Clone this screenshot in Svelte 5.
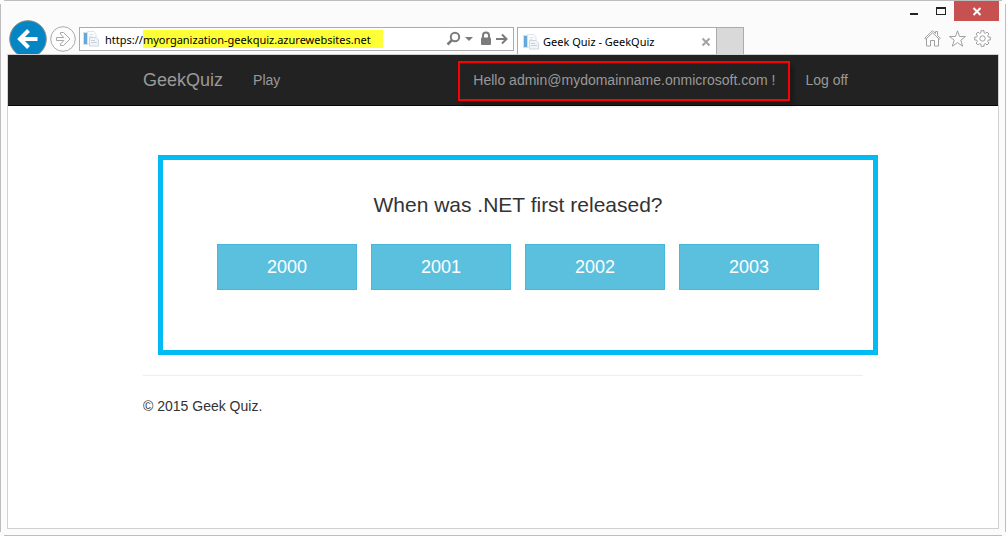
<script>
  const answers = ['2000', '2001', '2002', '2003'];
  let url = $state('https://myorganization-geekquiz.azurewebsites.net');
</script>

{#snippet favicon()}
  <svg class="favicon" width="16" height="16" viewBox="0 0 16 16" aria-hidden="true">
    <path d="M4.500 .5h6.500l2 2.500v10h-8.500z" fill="#fafcfe" stroke="#dde4eb" />
    <path d="M6.500 3.500h4M6.500 5.500h3" stroke="#dde4eb" />
    <rect x="0" y="1" width="5" height="13" fill="#cfe2f0" />
    <rect x="1" y="2" width="3" height="11" fill="#64a9da" />
    <path d="M6.500 6.500h6.500l2.500 2.500v6h-9z" fill="#f1f5f9" stroke="#cdd7e1" />
    <path d="M8 9.500h4M8 11.500h6" stroke="#c7d1da" />
  </svg>
{/snippet}

<div class="window">
  <header class="chrome">
    <div class="titlebar">
      <button aria-label="Minimize">
        <svg width="27" height="20" viewBox="0 0 27 20"><path d="M10 12h8v2h-8z" fill="#222" /></svg>
      </button>
      <button aria-label="Maximize">
        <svg width="27" height="20" viewBox="0 0 27 20"><path d="M9 6h10v8H9zM10 8v5h8V8z" fill="#222" fill-rule="evenodd" /></svg>
      </button>
      <button class="close" aria-label="Close">
        <svg width="45" height="20" viewBox="0 0 45 20"><path d="M19.500 7l7 7M26.500 7l-7 7" stroke="#fff" stroke-width="2" /></svg>
      </button>
    </div>

    <div class="toolbar">
      <button class="back" aria-label="Back">
        <svg width="38" height="34" viewBox="0 0 38 34">
          <circle cx="19" cy="19" r="18.300" fill="#0586c4" stroke="#8b8b8b" />
          <path d="M28.500 19H12" stroke="#fff" stroke-width="4" />
          <path d="M19.500 10.500L11 19l8.500 8.500" fill="none" stroke="#fff" stroke-width="4" />
        </svg>
      </button>
      <button class="forward" aria-label="Forward">
        <svg width="26" height="26" viewBox="0 0 26 26">
          <circle cx="13" cy="13" r="12.300" fill="#fdfdfd" stroke="#a9a9a9" />
          <path d="M6.500 11.500h7.300L10.500 8v-1.500h3L20 13l-6.500 6.500h-3V18l3.300-3.500H6.500z" fill="#fff" stroke="#a9a9a9" />
        </svg>
      </button>
      <div class="address">
        {@render favicon()}
        <input type="text" aria-label="Address" bind:value={url} spellcheck="false" />
        <button aria-label="Search">
          <svg width="30" height="16" viewBox="0 0 30 16">
            <circle cx="9" cy="6" r="4.200" fill="none" stroke="#7b7b7b" stroke-width="2" />
            <path d="M6 9L1.500 13.500" stroke="#7b7b7b" stroke-width="2.500" />
            <path d="M19 6h8l-4 4z" fill="#7b7b7b" />
          </svg>
        </button>
        <button aria-label="Website security">
          <svg width="12" height="16" viewBox="0 0 12 16">
            <path d="M3 7V4.500a3 3 0 0 1 6 0V7" fill="none" stroke="#7b7b7b" stroke-width="2" />
            <rect x="1" y="6.500" width="10" height="7.500" rx="1" fill="#7b7b7b" />
          </svg>
        </button>
        <button aria-label="Go">
          <svg width="12" height="16" viewBox="0 0 12 16">
            <path d="M0 8h10M6 3.500L10.500 8 6 12.500" fill="none" stroke="#7b7b7b" stroke-width="2" />
          </svg>
        </button>
      </div>
      <div class="tab">
        {@render favicon()}
        <span>Geek Quiz - GeekQuiz</span>
        <button aria-label="Close tab">
          <svg width="10" height="10" viewBox="0 0 10 10"><path d="M1.500 1.500l7 7M8.500 1.500l-7 7" stroke="#a3a3a3" stroke-width="2" /></svg>
        </button>
      </div>
      <button class="new-tab" aria-label="New tab"></button>
      <div class="tools">
        <button aria-label="Home">
          <svg width="17" height="17" viewBox="0 0 17 17" fill="#fff" stroke="#a0a0a0">
            <path d="M2.500 8.500v7.500h4v-5.500h4V16h4V8.500M.8 8.200l7.700-7.500 3 2.800V1.500h2v4l2.800 2.700-1 1L8.500 2.800 1.800 9.200z" />
          </svg>
        </button>
        <button aria-label="Favorites">
          <svg width="17" height="17" viewBox="0 0 17 17" fill="#fff" stroke="#a0a0a0">
            <path d="M8.500 .8l2 5.700h6l-4.700 3.700 1.900 6-5.200-3.600-5.200 3.600 1.900-6L.5 6.500h6z" />
          </svg>
        </button>
        <button aria-label="Tools">
          <svg width="17" height="17" viewBox="0 0 17 17" fill="#fff" stroke="#a0a0a0">
            <path d="M7 .7h3v2l1.500.7L13 2l2 2-1.400 1.500.7 1.500h2v3h-2l-.7 1.500L15 13l-2 2-1.500-1.400-1.500.7v2H7v-2l-1.500-.7L4 15l-2-2 1.400-1.500-.7-1.500h-2V7h2l.7-1.500L2 4l2-2 1.500 1.400L7 2.700z" />
            <circle cx="8.500" cy="8.500" r="2.700" />
          </svg>
        </button>
      </div>
    </div>
  </header>

  <div class="page">
    <nav>
      <div class="container bar">
        <a class="brand" href="#home">GeekQuiz</a>
        <a href="#play">Play</a>
        <a class="user" href="#account">Hello admin@mydomainname.onmicrosoft.com !</a>
        <a href="#logoff">Log off</a>
      </div>
    </nav>
    <div class="container">
      <main>
        <h1>When was .NET first released?</h1>
        <div class="answers">
          {#each answers as answer}
            <button>{answer}</button>
          {/each}
        </div>
      </main>
      <footer>© 2015 Geek Quiz.</footer>
    </div>
  </div>
</div>

<style>
  :global(body) {
    margin: 0;
    background: #fbfbfb;
  }
  .window {
    --edge: linear-gradient(#bdbdbd, #bdbdbd);
    box-sizing: border-box;
    min-height: 100vh;
    padding: 1px 7px 7px;
    display: flex;
    flex-direction: column;
    background:
      var(--edge) center top / calc(100% - 8px) 1px no-repeat,
      var(--edge) center bottom / calc(100% - 8px) 1px no-repeat,
      var(--edge) left center / 1px calc(100% - 8px) no-repeat,
      var(--edge) right center / 1px calc(100% - 8px) no-repeat,
      #fbfbfb;
  }
  button {
    padding: 0;
    border: 0;
    background: none;
    font: inherit;
    cursor: pointer;
  }
  svg {
    display: block;
    flex: none;
  }
  .chrome {
    font: 11px/16px "Noto Sans", "Open Sans", sans-serif;
    color: #000;
  }
  .titlebar {
    display: flex;
    justify-content: flex-end;
    align-items: flex-start;
    height: 19px;
  }
  .close {
    background: #c75050;
  }
  .toolbar {
    display: flex;
    align-items: flex-start;
    height: 34px;
    padding: 0 8px 0 2px;
  }
  .forward {
    margin: 6px 3px 0;
  }
  .address {
    box-sizing: border-box;
    flex: 0 1 435px;
    min-width: 0;
    height: 24px;
    margin: 7px 3px 0 0;
    padding: 0 5px 0 3px;
    display: flex;
    align-items: center;
    gap: 4px;
    border: 1px solid #ababab;
    background: #fff;
  }
  .address input {
    box-sizing: border-box;
    flex: 1;
    min-width: 0;
    height: 18px;
    padding: 0 0 0 2px;
    border: 0;
    outline: 0;
    font: inherit;
    color: #000;
    background: linear-gradient(#ffff37, #ffff37) 40px 0 / 240px 100% no-repeat;
  }
  .tab {
    box-sizing: border-box;
    flex: 0 1 200px;
    height: 27px;
    margin-top: 7px;
    padding: 2px 5px 0;
    display: flex;
    align-items: center;
    gap: 4px;
    border: 1px solid #ababab;
    border-bottom: 0;
    background: #fff;
    white-space: nowrap;
  }
  .tab span {
    flex: 1;
  }
  .new-tab {
    box-sizing: border-box;
    width: 27px;
    height: 27px;
    margin-top: 7px;
    border: 1px solid #ababab;
    border-width: 1px 1px 0 0;
    background: #d9d9d9;
  }
  .tools {
    display: flex;
    gap: 8px;
    margin: 10px 0 0 auto;
  }
  .page {
    flex: 1;
    border: 1px solid #d0d0d0;
    background: #fff;
    font: 14px/20px "Liberation Sans", Arial, sans-serif;
    color: #333;
  }
  nav {
    background: #222;
    border-bottom: 1px solid #080808;
  }
  .container {
    box-sizing: border-box;
    max-width: 750px;
    margin: 0 auto;
    padding: 0 15px;
  }
  .bar {
    display: flex;
    padding: 0;
  }
  .bar a {
    padding: 15px;
    color: #999;
    text-decoration: none;
  }
  .bar .brand {
    font-size: 18px;
  }
  .bar .user {
    position: relative;
    margin-left: auto;
  }
  .user::after {
    content: "";
    position: absolute;
    inset: 6px 0 4px 0;
    border: 2px solid #f00;
    box-shadow: 4px 4px 4px rgb(0 0 0 / 25%);
  }
  .bar a:last-child {
    margin-right: 15px;
  }
  main {
    box-sizing: border-box;
    width: 100%;
    min-height: 200px;
    margin: 49px 0 20px 15px;
    padding: 32px 20px;
    border: 5px solid #00bcf2;
    text-align: center;
  }
  h1 {
    margin: 0 0 26px;
    font-size: 21px;
    font-weight: 400;
    line-height: 26px;
  }
  .answers {
    display: flex;
    justify-content: center;
    gap: 14px;
  }
  .answers button {
    flex: 0 1 140px;
    height: 46px;
    border: 1px solid #46b8da;
    background: #5bc0de;
    color: #fff;
    font-size: 18px;
  }
  footer {
    padding: 20px 0;
    border-top: 1px solid #eee;
  }
</style>
